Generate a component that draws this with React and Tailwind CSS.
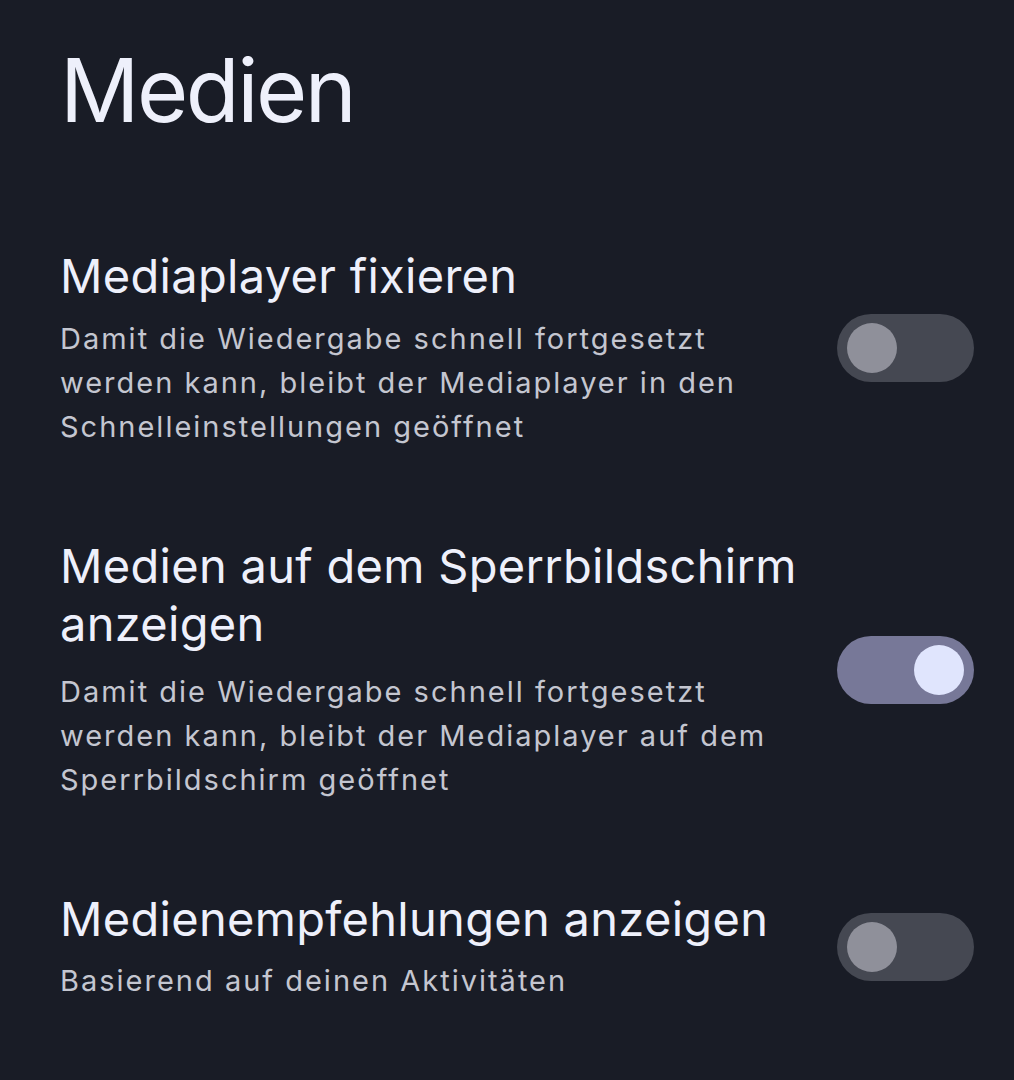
import React from "react";

function Toggle({ on }) {
  return (
    <div
      className={
        "flex h-[68px] w-[137px] shrink-0 items-center rounded-full px-[10px] " +
        (on ? "justify-end bg-[#777898]" : "justify-start bg-[#454852]")
      }
    >
      <div
        className={
          "h-[50px] w-[50px] rounded-full " +
          (on ? "bg-[#e0e5fd]" : "bg-[#8f909a]")
        }
      />
    </div>
  );
}

function Row({ title, lines, on, bodyGap }) {
  return (
    <div className="flex items-center gap-8">
      <div className="flex-1">
        <div className="text-[47px] leading-[58px] tracking-[0.3px] text-[#eef0fb]">
          {title.map((t, i) => (
            <div key={i} className="whitespace-nowrap">{t}</div>
          ))}
        </div>
        <div className={bodyGap + " text-[29px] leading-[44px] tracking-[2px] text-[#c4c6d0]"}>
          {lines.map((t, i) => (
            <div key={i} className="whitespace-nowrap">{t}</div>
          ))}
        </div>
      </div>
      <Toggle on={on} />
    </div>
  );
}

export default function App() {
  return (
    <div
      className="min-h-[1080px] w-full bg-[#191c26] pl-[60px] pr-[40px] pt-[45px]"
      style={{ fontFamily: 'Inter, sans-serif' }}
    >
      <h1 className="text-[88px] leading-[90px] tracking-[-2.5px] text-[#eef0fb]">Medien</h1>
      <div className="mt-[112px] flex flex-col gap-[88px]">
        <Row
          title={["Mediaplayer fixieren"]}
          lines={[
            "Damit die Wiedergabe schnell fortgesetzt",
            "werden kann, bleibt der Mediaplayer in den",
            "Schnelleinstellungen geöffnet",
          ]}
          on={false}
          bodyGap="mt-[12px]"
        />
        <Row
          title={["Medien auf dem Sperrbildschirm", "anzeigen"]}
          lines={[
            "Damit die Wiedergabe schnell fortgesetzt",
            "werden kann, bleibt der Mediaplayer auf dem",
            "Sperrbildschirm geöffnet",
          ]}
          on={true}
          bodyGap="mt-[17px]"
        />
        <Row
          title={["Medienempfehlungen anzeigen"]}
          lines={["Basierend auf deinen Aktivitäten"]}
          on={false}
          bodyGap="mt-[11px]"
        />
      </div>
    </div>
  );
}
